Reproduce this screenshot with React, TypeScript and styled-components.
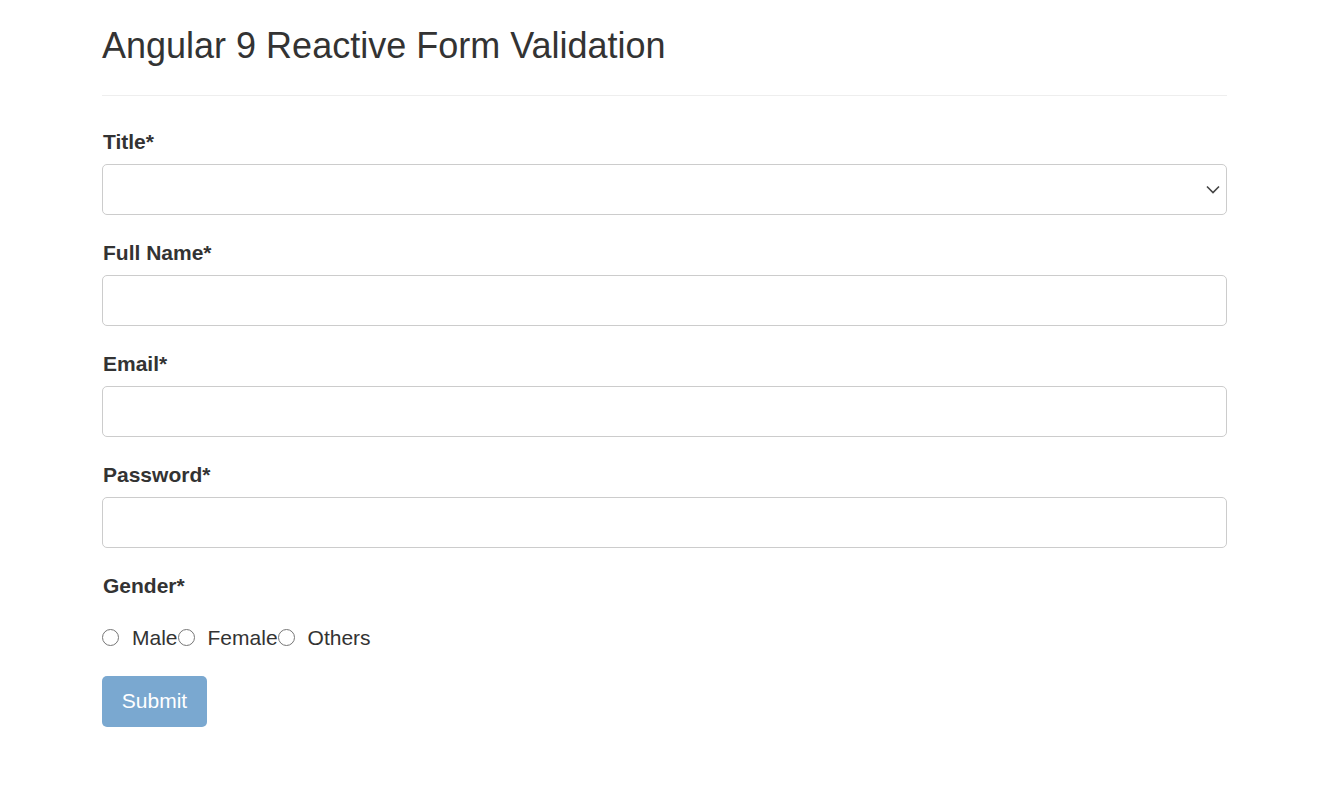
import React, { useState } from "react";
import styled, { createGlobalStyle } from "styled-components";

const GlobalStyle = createGlobalStyle`
  body {
    margin: 0;
    font-family: "Liberation Sans", Arial, sans-serif;
    color: #333;
    background: #fff;
  }
  * { box-sizing: border-box; }
`;

const Container = styled.div`
  width: 1125px;
  margin-left: 102px;
  padding-top: 26px;
`;

const Heading = styled.h2`
  font-size: 36px;
  font-weight: 400;
  line-height: 1.1;
  margin: 0;
  color: #333;
`;

const Divider = styled.hr`
  border: 0;
  border-top: 1px solid #eee;
  margin: 29px 0 34px;
`;

const Group = styled.div`
  margin-bottom: 26px;
`;

const Label = styled.label`
  display: block;
  font-size: 21px;
  font-weight: 700;
  line-height: 24px;
  margin: 0 0 10px 1px;
`;

const Input = styled.input`
  display: block;
  width: 100%;
  height: 51px;
  border: 1px solid #ccc;
  border-radius: 5px;
  padding: 10px 16px;
  font-size: 20px;
  font-family: inherit;
  color: #555;
  background: #fff;
`;

const SelectWrap = styled.div`
  position: relative;
`;

const Select = styled(Input).attrs({ as: "select" })`
  appearance: none;
`;

const Chevron = styled.svg`
  position: absolute;
  right: 7px;
  top: 18px;
  pointer-events: none;
`;

const RadioRow = styled.div`
  display: flex;
  align-items: center;
  font-size: 21px;
  line-height: 24px;
  margin: 28px 0 26px;
`;

const RadioLabel = styled.label`
  display: flex;
  align-items: center;
  cursor: pointer;
`;

const Radio = styled.input`
  width: 17px;
  height: 17px;
  margin: 0 13px 0 0;
  accent-color: #337ab7;
`;

const SubmitButton = styled.button`
  display: block;
  width: 105px;
  height: 51px;
  border: 1px solid transparent;
  border-radius: 5px;
  background: #7aa8d0;
  color: #fff;
  font-family: inherit;
  font-size: 21px;
  padding: 0;
  cursor: not-allowed;
`;

const genders = ["Male", "Female", "Others"];

function App() {
  const [gender, setGender] = useState("");

  return (
    <>
      <GlobalStyle />
      <Container>
        <Heading>Angular 9 Reactive Form Validation</Heading>
        <Divider />
        <form onSubmit={(e) => e.preventDefault()}>
          <Group>
            <Label>Title*</Label>
            <SelectWrap>
              <Select defaultValue="">
                <option value=""></option>
                <option>Mr</option>
                <option>Mrs</option>
                <option>Miss</option>
                <option>Ms</option>
              </Select>
              <Chevron width="14" height="14" viewBox="0 0 14 14">
                <path d="M1 4.5 L7 10.5 L13 4.5" fill="none" stroke="#444" strokeWidth="1.6" />
              </Chevron>
            </SelectWrap>
          </Group>
          <Group>
            <Label>Full Name*</Label>
            <Input type="text" />
          </Group>
          <Group>
            <Label>Email*</Label>
            <Input type="email" />
          </Group>
          <Group>
            <Label>Password*</Label>
            <Input type="password" />
          </Group>
          <div>
            <Label>Gender*</Label>
            <RadioRow>
              {genders.map((g) => (
                <RadioLabel key={g}>
                  <Radio
                    type="radio"
                    name="gender"
                    checked={gender === g}
                    onChange={() => setGender(g)}
                  />
                  {g}
                </RadioLabel>
              ))}
            </RadioRow>
          </div>
          <SubmitButton type="submit" disabled>Submit</SubmitButton>
        </form>
      </Container>
    </>
  );
}

export default App;
